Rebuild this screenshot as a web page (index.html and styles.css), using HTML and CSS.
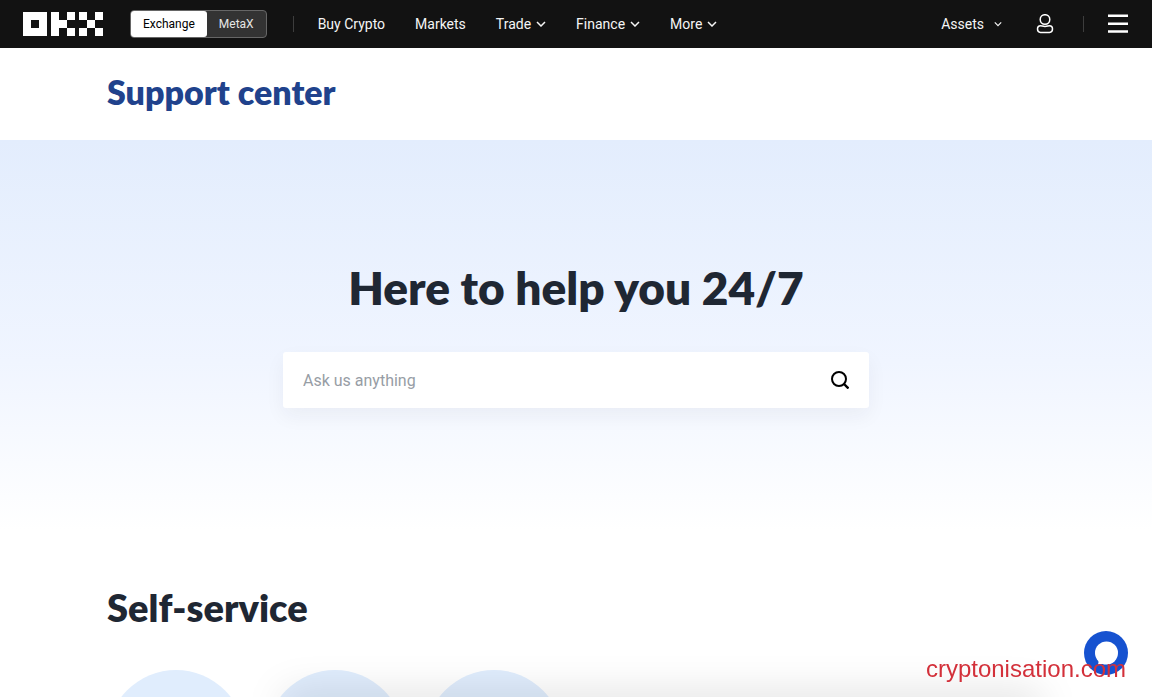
FILE: index.html
```html
<!DOCTYPE html>
<html lang="en">
<head>
<meta charset="UTF-8" />
<meta name="viewport" content="width=device-width, initial-scale=1" />
<title>Support center | OKX</title>
<link rel="stylesheet" href="styles.css">
</head>
<body>
<header class="topbar">
  <a class="logo" href="#" aria-label="OKX">
    <svg width="80" height="24" viewBox="0 0 80 24" fill="#fff" shape-rendering="crispEdges" aria-hidden="true">
      <path fill-rule="evenodd" d="M0 0h24v24H0zM8 8v8h8V8z" />
      <path d="M28 0h8v8h8v8h-8v8h-8zM44 0h8v8h-8zM44 16h8v8h-8z" />
      <path d="M56 0h8v8h-8zM72 0h8v8h-8zM64 8h8v8h-8zM56 16h8v8h-8zM72 16h8v8h-8z" />
    </svg>
  </a>
  <div class="switch">
    <button type="button" class="switch-item active">Exchange</button>
    <button type="button" class="switch-item">MetaX</button>
  </div>
  <span class="divider"></span>
  <nav class="menu">
    <a href="#">Buy Crypto</a>
    <a href="#">Markets</a>
    <a href="#">Trade <svg class="chevron" viewBox="0 0 10 6" aria-hidden="true"><path d="M1 1l4 4 4-4" /></svg></a>
    <a href="#">Finance <svg class="chevron" viewBox="0 0 10 6" aria-hidden="true"><path d="M1 1l4 4 4-4" /></svg></a>
    <a href="#">More <svg class="chevron" viewBox="0 0 10 6" aria-hidden="true"><path d="M1 1l4 4 4-4" /></svg></a>
  </nav>
  <div class="tools">
    <a class="assets" href="#">Assets <svg class="chevron small" viewBox="0 0 10 6" aria-hidden="true"><path d="M1 1l4 4 4-4" /></svg></a>
    <button type="button" class="icon-btn" aria-label="Account">
      <svg width="18" height="20" viewBox="0 0 18 20" fill="none" stroke="#fff" stroke-width="1.5" aria-hidden="true">
        <circle cx="9" cy="5.5" r="4.8" />
        <path d="M4.500 11.700c1.300 0 2.400.7 4.500.7s3.200-.7 4.500-.7c1.900 0 3 1.600 3 3.400 0 2-1.100 3.300-3 3.300h-9c-1.900 0-3-1.300-3-3.300 0-1.800 1.100-3.400 3-3.400z" />
      </svg>
    </button>
    <span class="divider"></span>
    <button type="button" class="icon-btn" aria-label="Menu">
      <svg width="20" height="20" viewBox="0 0 20 20" fill="#fff" aria-hidden="true">
        <path d="M0 .4h20v2.600H0zM0 8.600h20v2.400H0zM0 16.200h20v2.600H0z" />
      </svg>
    </button>
  </div>
</header>

<div class="page-title">
  <h1>Support center</h1>
</div>

<main>
  <section class="hero">
    <h2>Here to help you 24/7</h2>
    <form class="search" role="search">
      <input type="text" placeholder="Ask us anything" aria-label="Ask us anything" />
      <button type="submit" class="icon-btn" aria-label="Search">
        <svg width="18" height="18" viewBox="0 0 18 18" fill="none" stroke="#000" stroke-width="2" aria-hidden="true">
          <circle cx="8" cy="8" r="7" />
          <path d="M12.500 12.500l5 5" stroke-width="2.400" />
        </svg>
      </button>
    </form>
  </section>

  <section class="self-service">
    <h2>Self-service</h2>
    <div class="services">
      <span class="service"></span>
      <span class="service"></span>
      <span class="service"></span>
    </div>
  </section>
</main>

<div class="bottom-shade"></div>
<button type="button" class="chat" aria-label="Chat">
  <svg width="44" height="44" viewBox="0 0 44 44" aria-hidden="true">
    <circle cx="22" cy="22" r="22" fill="#1652d0" />
    <circle cx="22.500" cy="22" r="11.500" fill="#fff" />
    <path d="M12 26l3 3-1 4.500 8-1z" fill="#fff" />
  </svg>
</button>
<div class="site-mark">cryptonisation.com</div>
</body>
</html>
```
FILE: styles.css
```css
* {
  box-sizing: border-box;
}
html, body {
  margin: 0;
  height: 100%;
  overflow: hidden;
}
body {
  display: flex;
  flex-direction: column;
  font-family: Roboto, "Noto Sans", sans-serif;
  background: #fff;
  color: #1f2733;
}
h1, h2 {
  margin: 0;
  font-family: Lato, "Open Sans", sans-serif;
  font-weight: 800;
}
a {
  color: inherit;
  text-decoration: none;
}
button {
  font-family: inherit;
  border: none;
  padding: 0;
  background: none;
  cursor: pointer;
}
svg {
  display: block;
}

/* Top bar */
.topbar {
  flex: none;
  display: flex;
  align-items: center;
  height: 48px;
  padding: 0 24px 0 23px;
  background: #121212;
  color: #f5f5f5;
  font-size: 14px;
}
.switch {
  display: flex;
  height: 28px;
  margin: 0 26px 0 27px;
  border: 1px solid #666;
  border-radius: 4px;
  background: #333;
}
.switch-item {
  padding: 0 12px;
  font-size: 12px;
  color: #e6e6e6;
}
.switch-item.active {
  background: #fff;
  color: #000;
  border-radius: 3px;
}
.divider {
  width: 1px;
  height: 16px;
  background: #3d3d3d;
}
.menu {
  display: flex;
  gap: 30px;
  margin-left: 24px;
}
.menu a, .assets {
  display: flex;
  align-items: center;
  gap: 5px;
  white-space: nowrap;
}
.chevron {
  width: 10px;
  height: 6px;
  fill: none;
  stroke: #f5f5f5;
  stroke-width: 1.5;
}
.tools {
  display: flex;
  align-items: center;
  margin-left: auto;
}
.assets {
  gap: 10px;
  margin-right: 34px;
}
.chevron.small {
  width: 8px;
}
.tools .divider {
  margin: 0 24px 0 29px;
}

/* Page title */
.page-title {
  flex: none;
  padding: 23px 107px 27px;
}
.page-title h1 {
  font-size: 34px;
  line-height: 42px;
  color: #20428c;
}

/* Content below the title is cut at the window edge */
main {
  flex: 1;
  min-height: 0;
  overflow: hidden;
}

/* Hero */
.hero {
  display: flex;
  flex-direction: column;
  align-items: center;
  padding: 120px 24px 176px;
  background: linear-gradient(#e3edfd, #f0f5ff 50%, #fff 88%);
}
.hero h2 {
  font-size: 46px;
  line-height: 56px;
}
.search {
  display: flex;
  align-items: center;
  width: 100%;
  max-width: 586px;
  height: 56px;
  margin-top: 36px;
  padding: 0 20px;
  border-radius: 3px;
  background: #fff;
  box-shadow: 0 8px 20px rgba(31, 39, 51, 0.05);
}
.search input {
  flex: 1;
  min-width: 0;
  border: none;
  outline: none;
  padding: 0;
  background: none;
  font-family: inherit;
  font-size: 16px;
  color: #1f2733;
}
.search input::placeholder {
  color: #979da5;
}

/* Self-service */
.self-service {
  padding: 0 107px;
}
.self-service h2 {
  font-size: 38px;
  line-height: 46px;
}
.services {
  display: flex;
  gap: 21px;
  margin-top: 40px;
}
.service {
  flex: none;
  width: 138px;
  height: 138px;
  border-radius: 50%;
  background: #e0edfd;
}

/* Fixed overlays */
.bottom-shade {
  position: fixed;
  left: 25%;
  right: 10%;
  bottom: -24px;
  height: 24px;
  box-shadow: 0 0 40px 4px rgba(0, 0, 0, 0.13);
  pointer-events: none;
}
.chat {
  position: fixed;
  right: 24px;
  bottom: 22px;
}
.site-mark {
  position: fixed;
  right: 26px;
  bottom: 14px;
  font-family: "Liberation Sans", Arial, sans-serif;
  font-size: 24px;
  line-height: 28px;
  color: #d3303a;
  pointer-events: none;
}
```
